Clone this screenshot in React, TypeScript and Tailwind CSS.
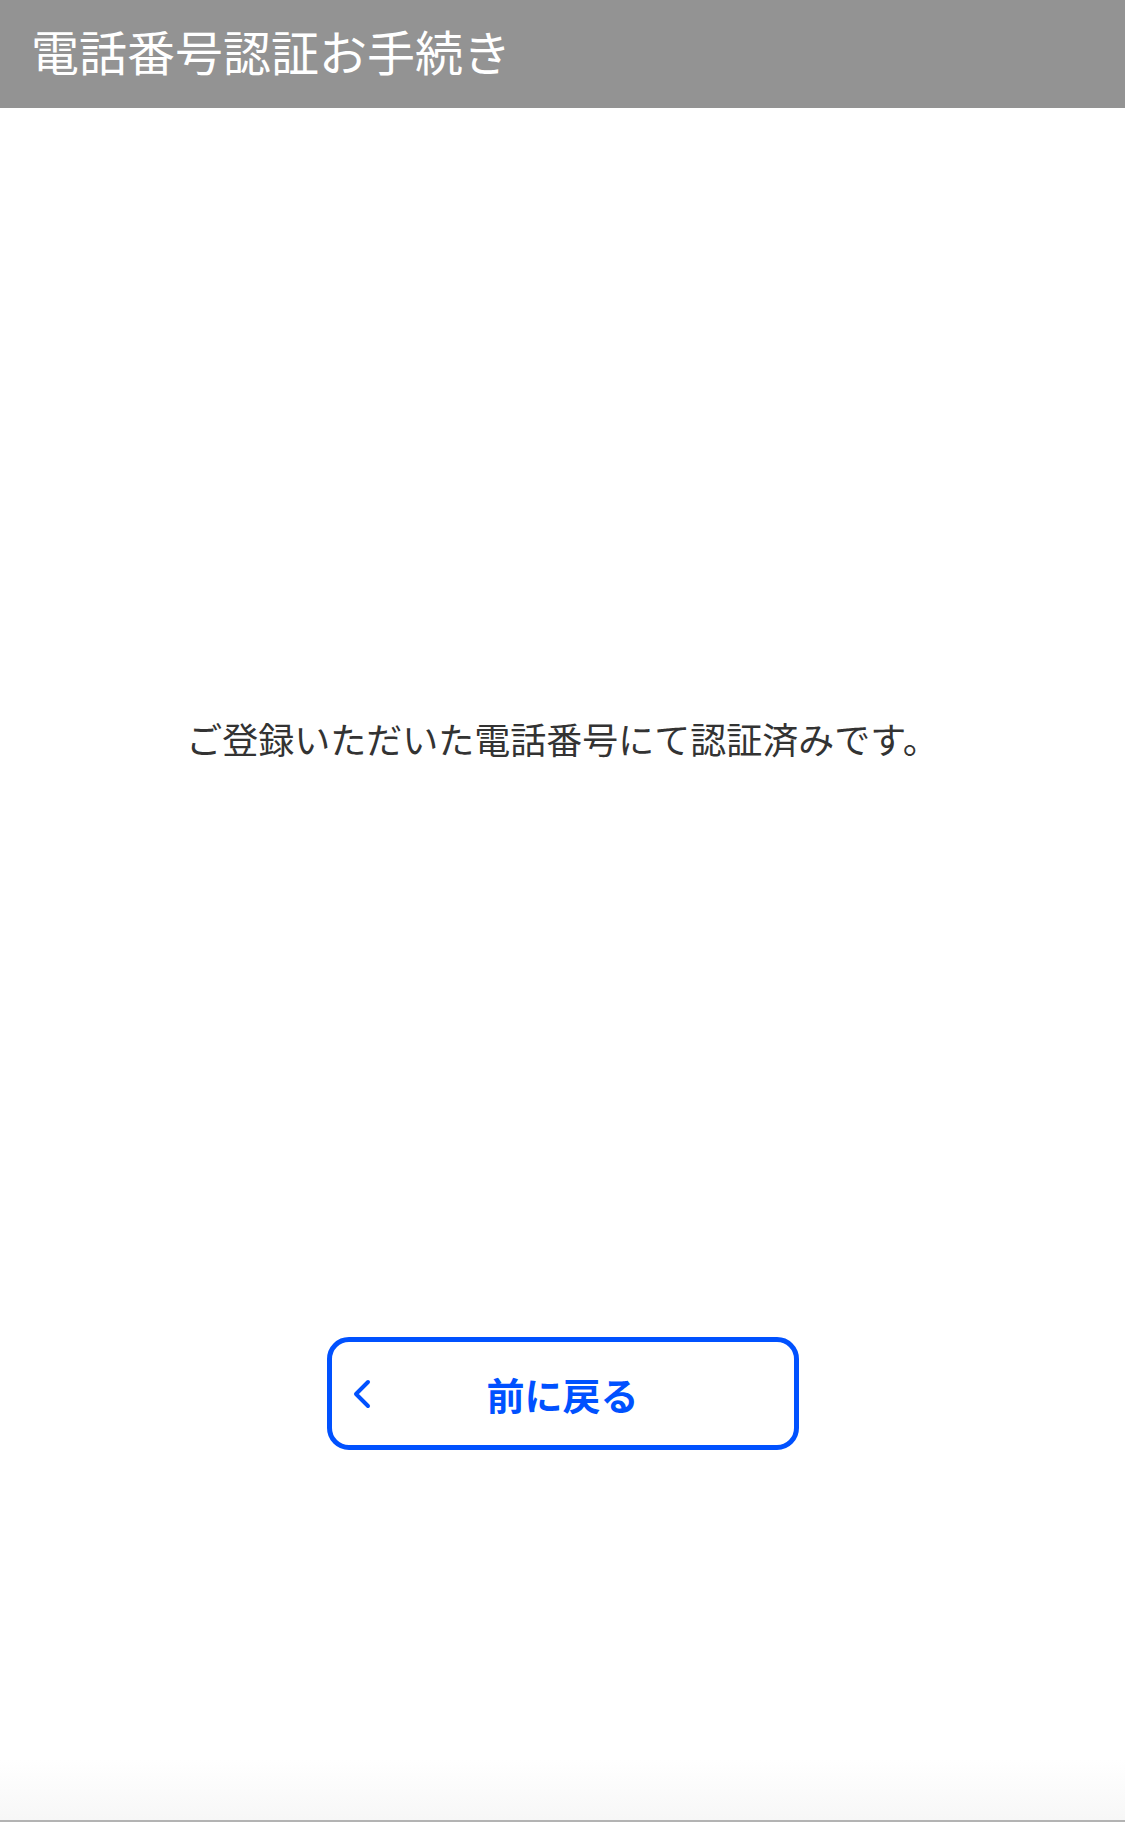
export default function App() {
  return (
    <div
      className="flex min-h-[1822px] w-full flex-col bg-white"
      style={{ fontFamily: '"Noto Sans CJK JP", "Noto Sans", sans-serif' }}
    >
      {/* Header */}
      <header className="flex h-[108px] items-center bg-[#939393] pb-[9px] pl-[31px]">
        <h1 className="text-[48px] leading-none font-normal text-white">電話番号認証お手続き</h1>
      </header>

      {/* Message */}
      <main className="flex flex-1 flex-col items-center">
        <p className="mt-[603px] text-[36px] leading-[54px] text-[#333333]">
          ご登録いただいた電話番号にて認証済みです。
        </p>

        <button className="mt-[572px] flex h-[113px] w-[472px] items-center rounded-[22px] border-[5px] border-[#0051ff] px-[21px] text-[#0051ff]">
          <svg width="18" height="30" viewBox="0 0 18 30" fill="none" className="shrink-0">
            <path d="M15 3 L3 15 L15 27" stroke="currentColor" strokeWidth="4" strokeLinecap="round" strokeLinejoin="round" />
          </svg>
          <span className="flex-1 text-center text-[38px] leading-none font-bold">前に戻る</span>
          <span className="w-[18px] shrink-0" />
        </button>

        <div className="flex-1" />
      </main>

      <div className="h-[60px] bg-gradient-to-b from-white to-[#f7f7f7]" />
      <div className="h-[2px] bg-[#b3b3b3]" />
    </div>
  );
}
